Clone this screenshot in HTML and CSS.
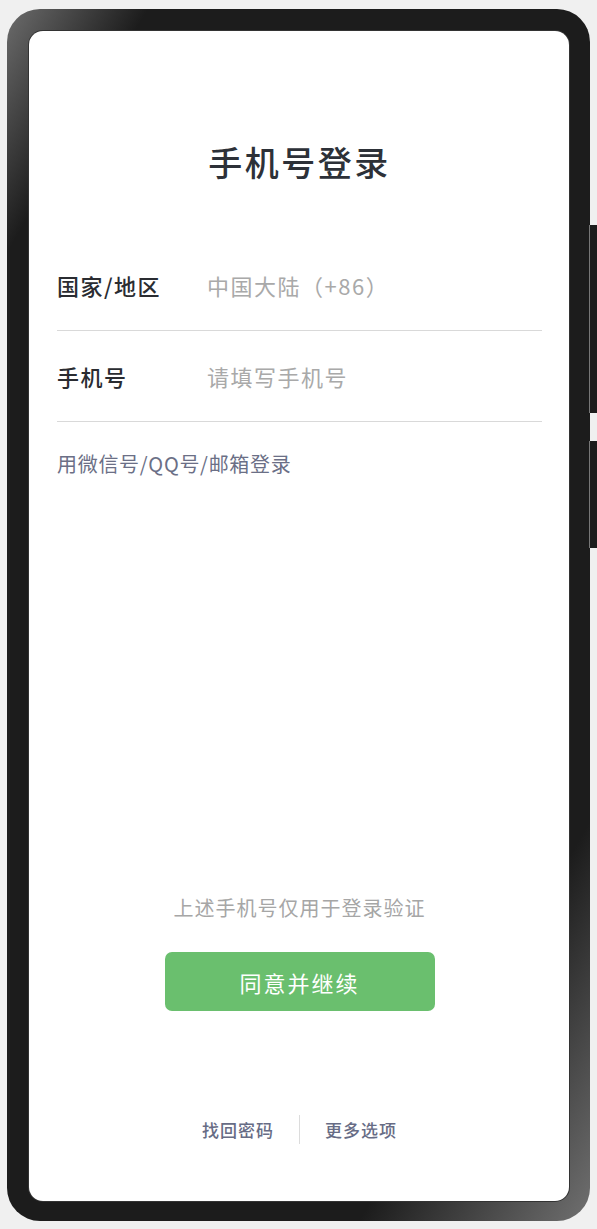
FILE: index.html
```html
<!DOCTYPE html>
<html lang="zh-CN">
<head>
<meta charset="utf-8">
<title>手机号登录</title>
<link rel="stylesheet" href="styles.css">
</head>
<body>
<div class="stage">
  <div class="phone">
    <span class="side-btn side-btn-power"></span>
    <span class="side-btn side-btn-volume"></span>
    <main class="screen">
      <h1 class="title">手机号登录</h1>
      <div class="form">
        <div class="row">
          <span class="label">国家/地区</span>
          <span class="value">中国大陆（+86）</span>
        </div>
        <div class="row">
          <span class="label">手机号</span>
          <span class="value">请填写手机号</span>
        </div>
      </div>
      <a class="alt-login">用微信号/QQ号/邮箱登录</a>
      <div class="bottom">
        <p class="hint">上述手机号仅用于登录验证</p>
        <button class="primary">同意并继续</button>
        <nav class="links">
          <a class="link">找回密码</a>
          <span class="sep"></span>
          <a class="link">更多选项</a>
        </nav>
      </div>
    </main>
  </div>
</div>
</body>
</html>
```

FILE: styles.css
```css
html, body {
  margin: 0;
  padding: 0;
  height: 100%;
  overflow: hidden;
  background: #f0f0f0;
  font-family: "Noto Sans CJK SC", "Noto Sans", sans-serif;
}

.stage {
  padding: 9px 0 0 7px;
}

.phone {
  position: relative;
  box-sizing: border-box;
  width: 583px;
  height: 1212px;
  padding: 22px 21px 20px 22px;
  border-radius: 33px;
  background: linear-gradient(120deg, #6c6c6c 0%, #1c1c1c 11%, #1c1c1c 82%, #707070 100%);
  display: flex;
}

.side-btn {
  position: absolute;
  left: 582px;
  width: 12px;
  background: #1c1c1c;
  border-left: 1px solid #777;
  border-radius: 0 5px 5px 0;
}

.side-btn-power {
  top: 216px;
  height: 188px;
}

.side-btn-volume {
  top: 432px;
  height: 107px;
}

.screen {
  flex: 1;
  box-sizing: border-box;
  background: #fff;
  border-radius: 14px;
  box-shadow: 0 0 0 1px #333;
  display: flex;
  flex-direction: column;
  padding: 0 27px 57px 28px;
}

.title {
  margin: 107px 0 0;
  text-align: center;
  font-size: 34px;
  line-height: 48px;
  font-weight: 500;
  letter-spacing: 2.5px;
  color: #2d3138;
}

.form {
  margin-top: 54px;
}

.row {
  display: flex;
  align-items: center;
  height: 90px;
  border-bottom: 1px solid #d9d9d9;
  font-size: 22px;
  letter-spacing: 1.5px;
}

.label {
  width: 150px;
  font-weight: 500;
  color: #2a2c31;
}

.value {
  color: #a9a9a9;
}

.alt-login {
  margin-top: 29px;
  font-size: 20px;
  line-height: 26px;
  letter-spacing: 0.7px;
  color: #6b6f86;
}

.bottom {
  margin-top: auto;
  display: flex;
  flex-direction: column;
  align-items: center;
}

.hint {
  margin: 0;
  font-size: 20px;
  line-height: 26px;
  letter-spacing: 1px;
  color: #a6a6a6;
}

.primary {
  margin-top: 31px;
  width: 270px;
  height: 59px;
  border: 0;
  border-radius: 7px;
  background: #6abf6e;
  color: #fff;
  font-family: inherit;
  font-size: 22px;
  letter-spacing: 2px;
}

.links {
  margin-top: 104px;
  display: flex;
  align-items: center;
  gap: 25px;
  height: 29px;
}

.link {
  font-size: 17px;
  font-weight: 500;
  letter-spacing: 1px;
  color: #676c85;
}

.sep {
  width: 1px;
  height: 29px;
  background: #dcdcdc;
}
```
